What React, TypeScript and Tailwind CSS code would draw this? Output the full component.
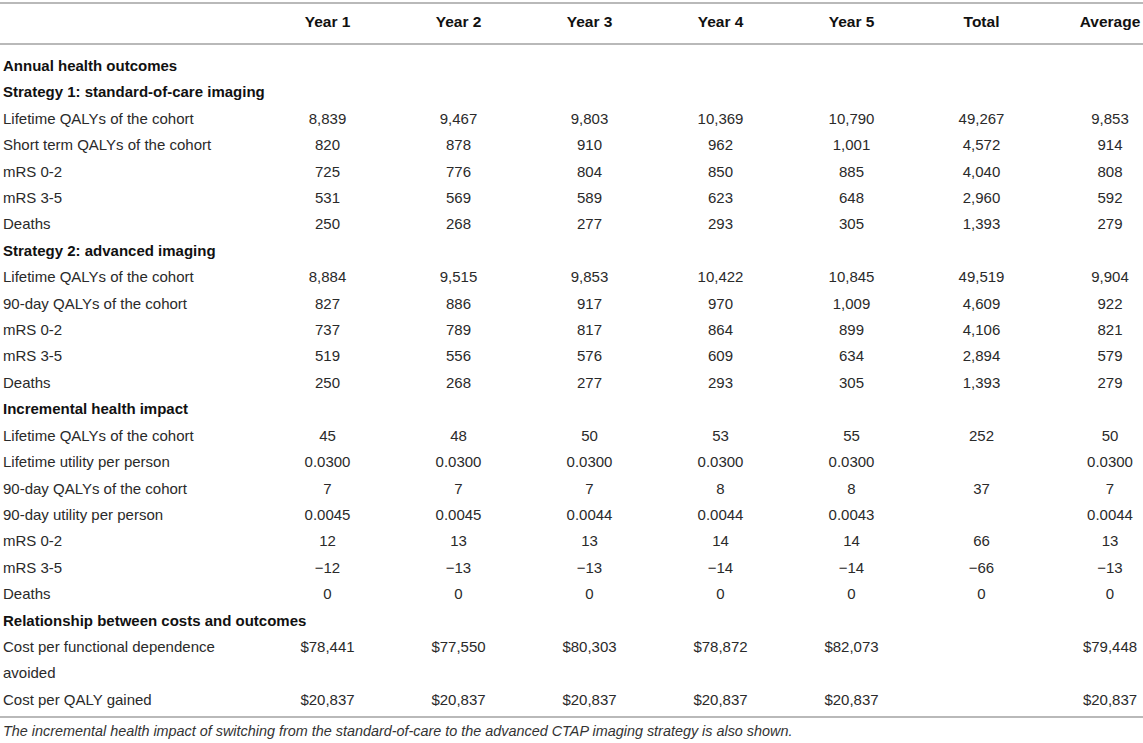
type Row =
  | { kind: "section"; label: string }
  | { kind: "data"; label: string | string[]; values: string[] };

const rows: Row[] = [
  { kind: "section", label: "Annual health outcomes" },
  { kind: "section", label: "Strategy 1: standard-of-care imaging" },
  { kind: "data", label: "Lifetime QALYs of the cohort", values: ["8,839", "9,467", "9,803", "10,369", "10,790", "49,267", "9,853"] },
  { kind: "data", label: "Short term QALYs of the cohort", values: ["820", "878", "910", "962", "1,001", "4,572", "914"] },
  { kind: "data", label: "mRS 0-2", values: ["725", "776", "804", "850", "885", "4,040", "808"] },
  { kind: "data", label: "mRS 3-5", values: ["531", "569", "589", "623", "648", "2,960", "592"] },
  { kind: "data", label: "Deaths", values: ["250", "268", "277", "293", "305", "1,393", "279"] },
  { kind: "section", label: "Strategy 2: advanced imaging" },
  { kind: "data", label: "Lifetime QALYs of the cohort", values: ["8,884", "9,515", "9,853", "10,422", "10,845", "49,519", "9,904"] },
  { kind: "data", label: "90-day QALYs of the cohort", values: ["827", "886", "917", "970", "1,009", "4,609", "922"] },
  { kind: "data", label: "mRS 0-2", values: ["737", "789", "817", "864", "899", "4,106", "821"] },
  { kind: "data", label: "mRS 3-5", values: ["519", "556", "576", "609", "634", "2,894", "579"] },
  { kind: "data", label: "Deaths", values: ["250", "268", "277", "293", "305", "1,393", "279"] },
  { kind: "section", label: "Incremental health impact" },
  { kind: "data", label: "Lifetime QALYs of the cohort", values: ["45", "48", "50", "53", "55", "252", "50"] },
  { kind: "data", label: "Lifetime utility per person", values: ["0.0300", "0.0300", "0.0300", "0.0300", "0.0300", "", "0.0300"] },
  { kind: "data", label: "90-day QALYs of the cohort", values: ["7", "7", "7", "8", "8", "37", "7"] },
  { kind: "data", label: "90-day utility per person", values: ["0.0045", "0.0045", "0.0044", "0.0044", "0.0043", "", "0.0044"] },
  { kind: "data", label: "mRS 0-2", values: ["12", "13", "13", "14", "14", "66", "13"] },
  { kind: "data", label: "mRS 3-5", values: ["\u221212", "\u221213", "\u221213", "\u221214", "\u221214", "\u221266", "\u221213"] },
  { kind: "data", label: "Deaths", values: ["0", "0", "0", "0", "0", "0", "0"] },
  { kind: "section", label: "Relationship between costs and outcomes" },
  { kind: "data", label: ["Cost per functional dependence", "avoided"], values: ["$78,441", "$77,550", "$80,303", "$78,872", "$82,073", "", "$79,448"] },
  { kind: "data", label: "Cost per QALY gained", values: ["$20,837", "$20,837", "$20,837", "$20,837", "$20,837", "", "$20,837"] },
];

const headers = ["Year 1", "Year 2", "Year 3", "Year 4", "Year 5", "Total", "Average"];

const grid = "grid grid-cols-[262px_131px_131px_131px_131px_131px_129px_128px]";

export default function App() {
  return (
    <div className="w-[1143px] h-[743px] overflow-hidden bg-white font-['Liberation_Sans',Arial,sans-serif] text-[#2a2a2a]">
      <div className="w-[1174px] pt-[2px]">
        <div className="h-[2px] bg-[#b9b9b9]" />
        <div className={`${grid} h-[39px] items-center pb-[3px] text-[15.5px] font-bold text-[#111]`}>
          <div />
          {headers.map((h) => (
            <div key={h} className="text-center">
              {h}
            </div>
          ))}
        </div>
        <div className="h-[2px] bg-[#b9b9b9]" />

        <div className="pt-[8px] pb-[3px] text-[15px] leading-[26.4px]">
          {rows.map((r, i) =>
            r.kind === "section" ? (
              <div key={i} className="pl-[3px] font-bold text-[#111]">
                {r.label}
              </div>
            ) : (
              <div key={i} className={`${grid} items-start`}>
                <div className="pl-[3px]">
                  {Array.isArray(r.label)
                    ? r.label.map((l, j) => <div key={j}>{l}</div>)
                    : r.label}
                </div>
                {r.values.map((v, j) => (
                  <div key={j} className="text-center">
                    {v}
                  </div>
                ))}
              </div>
            )
          )}
        </div>

        <div className="h-[2px] bg-[#b9b9b9]" />
        <p className="pt-[5px] pl-[3px] text-[14.4px] leading-[16px] italic text-[#333]">
          The incremental health impact of switching from the standard-of-care to the advanced CTAP imaging strategy is also shown.
        </p>
      </div>
    </div>
  );
}
